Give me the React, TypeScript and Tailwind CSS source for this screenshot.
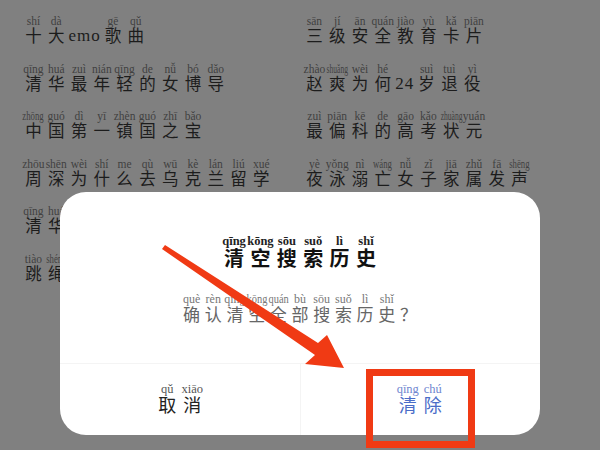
type Cell = [string, string];

// a word: pinyin sitting on top of its character
function Word({ py, zh, w = 'w-[23px]', pyClass, zhClass }: { py: string; zh: string; w?: string; pyClass: string; zhClass: string }) {
  return (
    <div className={`flex flex-col items-center shrink-0 ${w}`}>
      <span className={`whitespace-nowrap ${pyClass}`}>{py || '\u00a0'}</span>
      <span className={`whitespace-nowrap ${zhClass}`}>{zh}</span>
    </div>
  );
}

// the long syllables are squeezed so they stay inside their cell
function listPinyinClass(py: string) {
  if (py.length >= 6) return "font-['Liberation_Serif',serif] text-[11.5px] leading-[12px] text-[#404040] scale-x-[0.66]";
  if (py.length === 5 || py === 'wáng') return "font-['Liberation_Serif',serif] text-[11.5px] leading-[12px] text-[#404040] scale-x-[0.76]";
  return "font-['Liberation_Serif',serif] text-[11.5px] leading-[12px] text-[#404040]";
}

function Line({ cells }: { cells: Cell[] }) {
  return (
    <div className="flex h-[47.5px]">
      {cells.map(([py, zh], i) => {
        const latin = zh === 'emo' || zh === '24';
        return (
          <Word
            key={i}
            py={py}
            zh={zh}
            w={zh === 'emo' ? 'w-[34px]' : zh === '24' ? 'w-[21px]' : 'w-[22.8px]'}
            pyClass={listPinyinClass(py)}
            zhClass={
              latin
                ? "font-['Liberation_Serif',serif] text-[17px] tracking-[1px] leading-[17px] text-[#1c1c1c]"
                : "font-['Noto_Sans_CJK_SC',sans-serif] text-[16.5px] leading-[17px] text-[#1c1c1c]"
            }
          />
        );
      })}
    </div>
  );
}

const leftRows: Cell[][] = [
  [['shí', '十'], ['dà', '大'], ['', 'emo'], ['gē', '歌'], ['qǔ', '曲']],
  [['qīng', '清'], ['huá', '华'], ['zuì', '最'], ['nián', '年'], ['qīng', '轻'], ['de', '的'], ['nǚ', '女'], ['bó', '博'], ['dǎo', '导']],
  [['zhōng', '中'], ['guó', '国'], ['dì', '第'], ['yī', '一'], ['zhèn', '镇'], ['guó', '国'], ['zhī', '之'], ['bǎo', '宝']],
  [['zhōu', '周'], ['shēn', '深'], ['wèi', '为'], ['shí', '什'], ['me', '么'], ['qù', '去'], ['wū', '乌'], ['kè', '克'], ['lán', '兰'], ['liú', '留'], ['xué', '学']],
  [['qīng', '清'], ['huá', '华']],
  [['tiào', '跳'], ['shéng', '绳']],
];

const rightRows: Cell[][] = [
  [['sān', '三'], ['jí', '级'], ['ān', '安'], ['quán', '全'], ['jiào', '教'], ['yù', '育'], ['kǎ', '卡'], ['piān', '片']],
  [['zhào', '赵'], ['shuǎng', '爽'], ['wèi', '为'], ['hé', '何'], ['', '24'], ['suì', '岁'], ['tuì', '退'], ['yì', '役']],
  [['zuì', '最'], ['piān', '偏'], ['kē', '科'], ['de', '的'], ['gāo', '高'], ['kǎo', '考'], ['zhuàng', '状'], ['yuán', '元']],
  [['yè', '夜'], ['yǒng', '泳'], ['nì', '溺'], ['wáng', '亡'], ['nǚ', '女'], ['zǐ', '子'], ['jiā', '家'], ['zhǔ', '属'], ['fā', '发'], ['shēng', '声']],
];

const title: Cell[] = [['qīng', '清'], ['kōng', '空'], ['sōu', '搜'], ['suǒ', '索'], ['lì', '历'], ['shǐ', '史']];
const message: Cell[] = [['què', '确'], ['rèn', '认'], ['qīng', '清'], ['kōng', '空'], ['quán', '全'], ['bù', '部'], ['sōu', '搜'], ['suǒ', '索'], ['lì', '历'], ['shǐ', '史'], ['', '？']];

export default function App() {
  return (
    <div className="relative w-[600px] h-[450px] overflow-hidden bg-[#808080] font-['Liberation_Serif',serif]">
      {/* list behind the dialog */}
      <div className="flex pt-[15px] pl-[22px]">
        <div className="w-[281px]">
          {leftRows.map((r, i) => <Line key={i} cells={r} />)}
        </div>
        <div>
          {rightRows.map((r, i) => <Line key={i} cells={r} />)}
        </div>
      </div>

      {/* dialog */}
      <div className="absolute left-[60px] top-[192px] w-[480px] h-[243px] rounded-[26px] bg-white flex flex-col">
        <div className="flex-1 flex flex-col items-center pt-[44px]">
          <div className="flex">
            {title.map(([py, zh], i) => (
              <Word
                key={i}
                py={py}
                zh={zh}
                w="w-[26.4px]"
                pyClass="font-['Liberation_Serif',serif] font-bold text-[12.5px] leading-[11px] text-[#222]"
                zhClass="font-['Noto_Sans_CJK_SC',sans-serif] font-bold text-[20px] leading-[22px] text-[#111]"
              />
            ))}
          </div>
          <div className="flex mt-[24px]">
            {message.map(([py, zh], i) => (
              <Word
                key={i}
                py={py}
                zh={zh}
                w="w-[21.7px]"
                pyClass={
                  py === 'kōng' || py === 'quán'
                    ? "font-['Liberation_Serif',serif] text-[12px] leading-[12px] text-[#777] scale-x-[0.87]"
                    : "font-['Liberation_Serif',serif] text-[12px] leading-[12px] text-[#777]"
                }
                zhClass="font-['Noto_Sans_CJK_SC',sans-serif] text-[17px] leading-[17px] text-[#666]"
              />
            ))}
          </div>
        </div>
        <div className="flex h-[72px] border-t border-[#f4f4f4]">
          <div className="flex-1 flex justify-center pt-[19px]">
            <div className="flex">
              <Word py="qǔ" zh="取" w="w-[25px]" pyClass="font-['Liberation_Serif',serif] text-[12.5px] leading-[12px] text-[#555]" zhClass="font-['Noto_Sans_CJK_SC',sans-serif] text-[18px] leading-[18px] text-[#222]" />
              <Word py="xiāo" zh="消" w="w-[25px]" pyClass="font-['Liberation_Serif',serif] text-[12.5px] leading-[12px] text-[#555]" zhClass="font-['Noto_Sans_CJK_SC',sans-serif] text-[18px] leading-[18px] text-[#222]" />
            </div>
          </div>
          <div className="flex-1 flex justify-center pt-[19px] border-l border-[#f4f4f4]">
            <div className="flex">
              <Word py="qīng" zh="清" w="w-[25px]" pyClass="font-['Liberation_Serif',serif] text-[12.5px] leading-[12px] text-[#6f86cf]" zhClass="font-['Noto_Sans_CJK_SC',sans-serif] text-[18px] leading-[18px] text-[#4a6cc8]" />
              <Word py="chú" zh="除" w="w-[25px]" pyClass="font-['Liberation_Serif',serif] text-[12.5px] leading-[12px] text-[#6f86cf]" zhClass="font-['Noto_Sans_CJK_SC',sans-serif] text-[18px] leading-[18px] text-[#4a6cc8]" />
            </div>
          </div>
        </div>
      </div>

      {/* annotation drawn over the screenshot */}
      <svg className="absolute left-0 top-0" width="600" height="450" viewBox="0 0 600 450">
        <polygon points="165,245 162,249 315,355 305,364 344,368 327,335 318,343" fill="#f03a14" />
      </svg>
      <div className="absolute left-[366px] top-[369px] w-[109px] h-[79px] border-[7px] border-[#f03a14]" />
    </div>
  );
}
